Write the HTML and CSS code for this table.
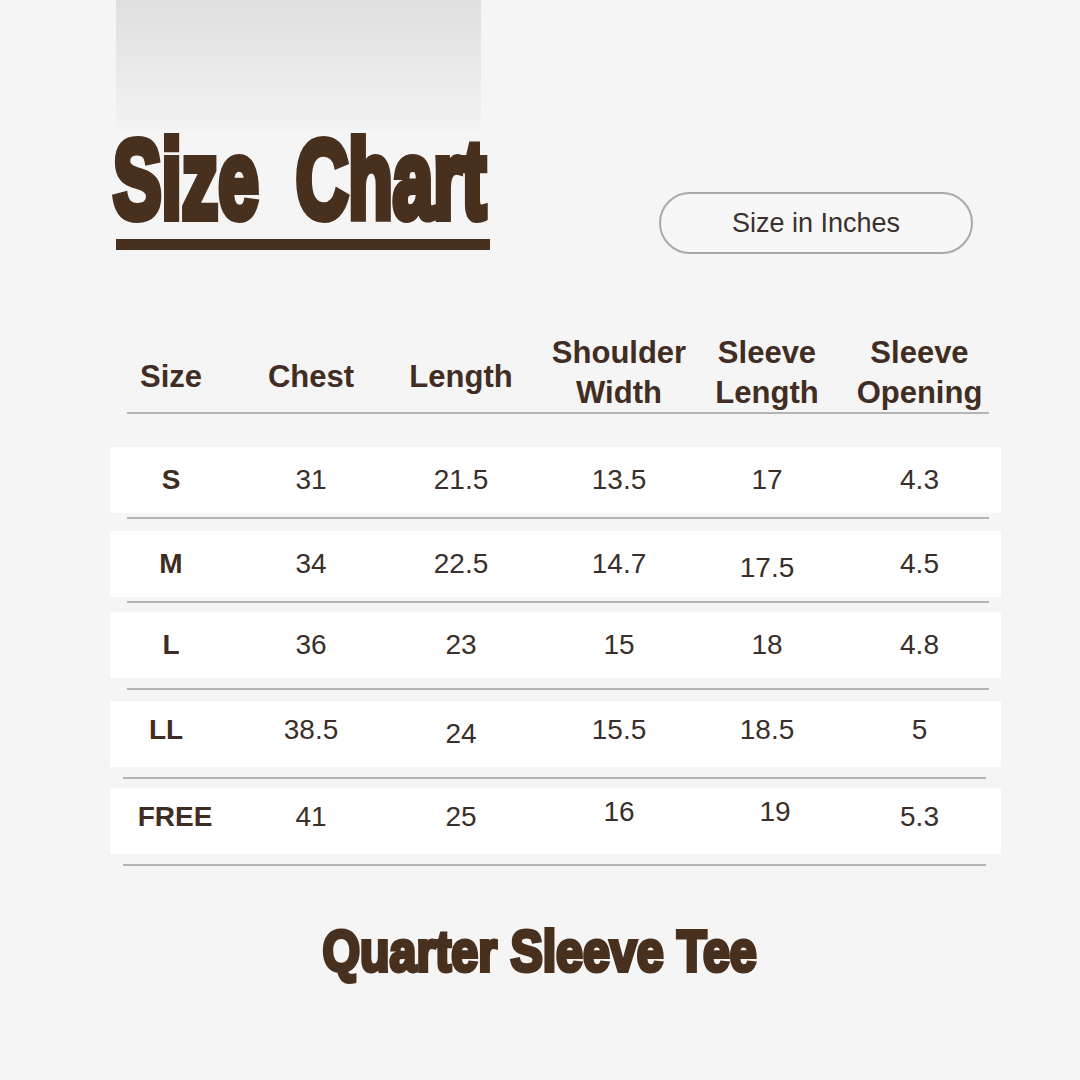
FILE: index.html
```html
<!DOCTYPE html>
<html>
<head>
<meta charset="utf-8">
<title>Size Chart</title>
<link rel="stylesheet" href="styles.css">
</head>
<body>
<div class="page">
  <header class="top">
    <div class="hero">
      <div class="fade"></div>
      <h1 class="title"><span>Size Chart</span></h1>
      <div class="bar"></div>
    </div>
    <div class="pill">Size in Inches</div>
  </header>

  <section class="chart">
    <div class="head grid">
      <div class="single">Size</div>
      <div class="single">Chest</div>
      <div class="single">Length</div>
      <div>Shoulder<br>Width</div>
      <div>Sleeve<br>Length</div>
      <div>Sleeve<br>Opening</div>
    </div>
    <div class="rule"></div>

    <div class="row grid">
      <div class="lbl">S</div><div>31</div><div>21.5</div><div>13.5</div><div>17</div><div>4.3</div>
    </div>
    <div class="rule"></div>

    <div class="row grid">
      <div class="lbl">M</div><div>34</div><div>22.5</div><div>14.7</div><div class="dn4">17.5</div><div>4.5</div>
    </div>
    <div class="rule"></div>

    <div class="row grid">
      <div class="lbl">L</div><div>36</div><div>23</div><div>15</div><div>18</div><div>4.8</div>
    </div>
    <div class="rule"></div>

    <div class="row grid">
      <div class="lbl up4 ll">LL</div><div class="up4">38.5</div><div>24</div><div class="up4">15.5</div><div class="up4">18.5</div><div class="up4">5</div>
    </div>
    <div class="rule"></div>

    <div class="row grid">
      <div class="lbl up4 free">FREE</div><div class="up4">41</div><div class="up4">25</div><div class="up9">16</div><div class="up9 nudge">19</div><div class="up4">5.3</div>
    </div>
    <div class="rule"></div>
  </section>

  <footer class="footer"><span>Quarter Sleeve Tee</span></footer>
</div>
</body>
</html>
```

FILE: styles.css
```css
html, body {
  margin: 0;
  padding: 0;
}

body {
  background: #f5f5f5;
  font-family: "Liberation Sans", Arial, sans-serif;
  color: #45302a;
}

.page {
  width: 1080px;
  height: 1080px;
  overflow: hidden;
}

/* ---------- top ---------- */
.top {
  display: flex;
  align-items: flex-start;
  padding-left: 116px;
}

.hero {
  width: 374px;
  flex: none;
}

.fade {
  width: 365px;
  height: 130px;
  background: linear-gradient(#dfdfdf, #f3f3f3);
}

.title {
  margin: 0;
  height: 100px;
  line-height: 100px;
  font-size: 112px;
  font-weight: 700;
  white-space: nowrap;
  word-spacing: 26px;
  color: #48301f;
}

.title span {
  display: inline-block;
  margin-left: -3px;
  transform-origin: left center;
  transform: scaleX(0.65);
  -webkit-text-stroke: 8px #48301f;
}

.bar {
  margin-top: 9px;
  width: 374px;
  height: 11px;
  background: #48301f;
}

.pill {
  flex: none;
  margin-left: 169px;
  margin-top: 192px;
  width: 314px;
  height: 62px;
  box-sizing: border-box;
  border: 2px solid #a9a9a9;
  border-radius: 31px;
  background: #f7f7f7;
  display: flex;
  align-items: center;
  justify-content: center;
  font-size: 27px;
  color: #3b302c;
}

/* ---------- chart ---------- */
.chart {
  margin-top: 79px;
  margin-left: 110px;
  width: 891px;
}

.grid {
  display: grid;
  grid-template-columns: 122px 158px 142px 174px 122px 173px;
  align-items: center;
  text-align: center;
}

.grid > :last-child {
  padding-left: 10px;
}

.head {
  height: 79px;
  font-weight: 700;
  font-size: 31px;
  line-height: 40px;
  color: #422d22;
}

.head .single {
  padding-top: 8px;
}

.rule {
  height: 2px;
  margin: 0 12px 0 17px;
  background: #b4b4b4;
}

.row {
  height: 66px;
  background: #ffffff;
  font-size: 28px;
  line-height: 32px;
  color: #3a2f2a;
}

.row .lbl {
  font-weight: 700;
  color: #3f2c22;
}

.lbl.ll { padding-right: 10px; }
.lbl.free { padding-left: 8px; }

.dn4 { padding-top: 8px; }
.up4 { padding-bottom: 8px; }
.up9 { padding-bottom: 18px; }
.nudge { padding-left: 16px; }

/* vertical rhythm of the chart */
.chart > .row { margin-top: 10px; }
.chart > .rule { margin-top: 10px; }
.chart > .rule:nth-child(2) { margin-top: 0; }
.chart > .row:nth-child(3) { margin-top: 33px; }
.chart > .rule:nth-child(4),
.chart > .rule:nth-child(6) { margin-top: 4px; }
.chart > .row:nth-child(5) { margin-top: 12px; }
.chart > .row:nth-child(7) { margin-top: 9px; }
.chart > .row:nth-child(9) { margin-top: 11px; }
.chart > .row:nth-child(11) { margin-top: 9px; }
.chart > .rule:nth-child(10),
.chart > .rule:nth-child(12) { margin-left: 13px; margin-right: 15px; }

/* ---------- footer ---------- */
.footer {
  margin-top: 55px;
  height: 60px;
  line-height: 60px;
  font-size: 58px;
  font-weight: 700;
  text-align: center;
  white-space: nowrap;
  color: #48301f;
}

.footer span {
  display: inline-block;
  transform: scaleX(0.833);
  -webkit-text-stroke: 4px #48301f;
}
```
